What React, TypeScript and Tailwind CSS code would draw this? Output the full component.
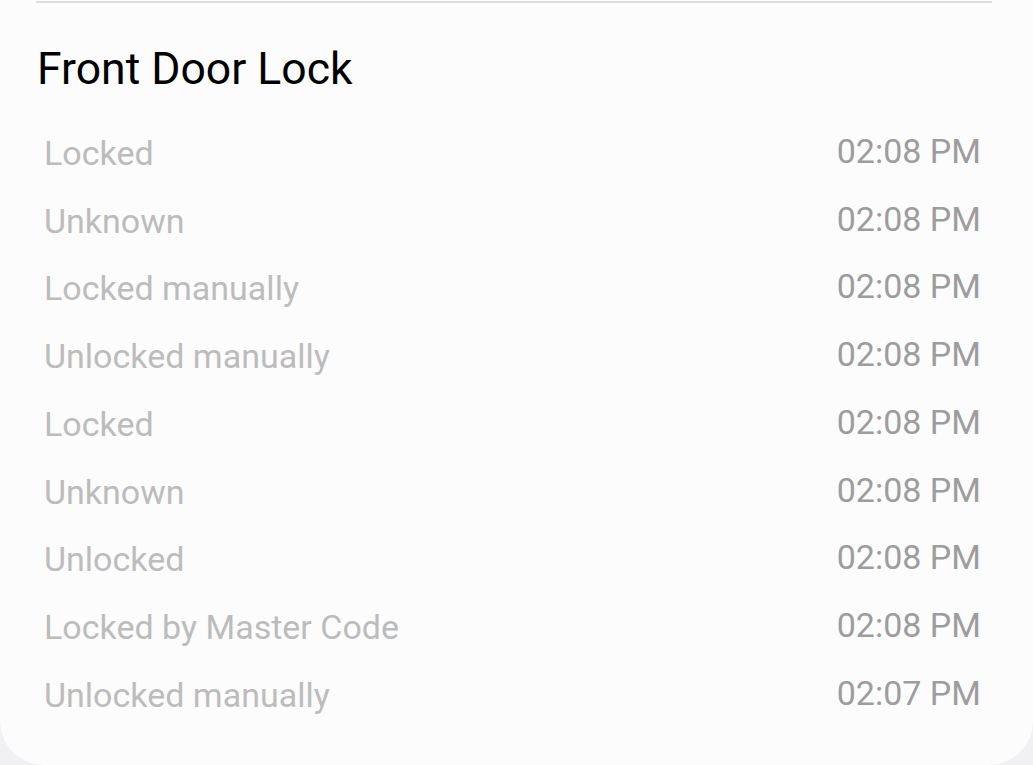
import React, { FC } from 'react';

interface LockEvent {
  label: string;
  time: string;
}

const events: LockEvent[] = [
  { label: 'Locked', time: '02:08 PM' },
  { label: 'Unknown', time: '02:08 PM' },
  { label: 'Locked manually', time: '02:08 PM' },
  { label: 'Unlocked manually', time: '02:08 PM' },
  { label: 'Locked', time: '02:08 PM' },
  { label: 'Unknown', time: '02:08 PM' },
  { label: 'Unlocked', time: '02:08 PM' },
  { label: 'Locked by Master Code', time: '02:08 PM' },
  { label: 'Unlocked manually', time: '02:07 PM' }
];

const EventRow: FC<{ event: LockEvent }> = ({ event }) => (
  <li className="flex items-center justify-between h-[67.75px] pl-[44px] pr-[52px]">
    <span className="text-[34px] leading-none text-[#bcbcbc]">{event.label}</span>
    <span className="text-[34px] leading-none text-[#9d9d9d] pb-[4px]">{event.time}</span>
  </li>
);

const App: FC = () => {
  return (
    <div
      className="w-[1033px] h-[765px] bg-[#f1f1f3] overflow-hidden"
      style={{ fontFamily: 'Roboto, "Noto Sans", sans-serif' }}
    >
      <div className="h-full bg-[#fcfcfc] rounded-b-[44px] flex flex-col">
        {/* Divider */}
        <div className="ml-[36px] mr-[41px] h-[2px] mt-[1px] bg-[#dcdcdc]" />

        {/* Title */}
        <h1 className="ml-[37px] mt-[42px] text-[44.5px] leading-[49px] text-black">Front Door Lock</h1>

        {/* History list */}
        <ul className="mt-[25px]">
          {events.map((ev, i) => (
            <EventRow key={i} event={ev} />
          ))}
        </ul>
      </div>
    </div>
  );
};

export default App;
